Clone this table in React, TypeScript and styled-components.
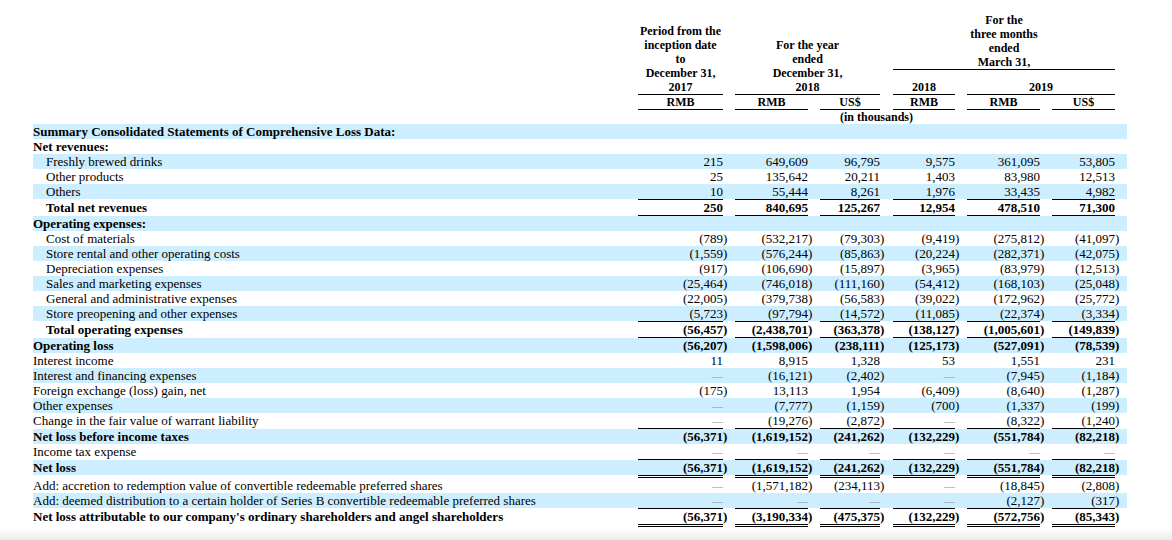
import React from "react";
import styled, { createGlobalStyle } from "styled-components";

const GlobalStyle = createGlobalStyle`
  html, body { margin: 0; padding: 0; }
  body {
    min-height: 540px;
    background: linear-gradient(to bottom, #ffffff 0, #ffffff 528px, #ebebeb 540px);
    font-family: "Liberation Serif", "Times New Roman", serif;
    color: #000;
  }
`;

const COLS = "605px 85px 12px 73px 12px 60px 13px 62px 12px 73px 12px 63px 12px";

const Page = styled.div`
  padding-left: 33px;
  width: 1094px;
`;

const Header = styled.div`
  display: grid;
  grid-template-columns: ${COLS};
  grid-template-rows: 69px 1px 24px 1px 14px 1px 14px;
  font-weight: 700;
  font-size: 12px;
  line-height: 14px;
  text-align: center;
`;

const HeadCell = styled.div<{ $col: string; $row: string }>`
  grid-column: ${(p) => p.$col};
  grid-row: ${(p) => p.$row};
  align-self: end;
  white-space: nowrap;
`;

const HeadRule = styled.div<{ $col: string; $row: number }>`
  grid-column: ${(p) => p.$col};
  grid-row: ${(p) => p.$row};
  background: #000;
  height: 1px;
`;

const Table = styled.div`
  display: flex;
  flex-direction: column;
`;

const Row = styled.div<{ $shade: boolean; $bold?: boolean }>`
  display: grid;
  grid-template-columns: ${COLS};
  height: 15px;
  line-height: 15px;
  font-size: 13px;
  font-weight: ${(p) => (p.$bold ? 700 : 400)};
  background: ${(p) => (p.$shade ? "#cceeff" : "transparent")};
`;

const Label = styled.div<{ $indent?: boolean }>`
  padding-left: ${(p) => (p.$indent ? "13px" : "0")};
  white-space: nowrap;
`;

const Num = styled.div`
  text-align: right;
  white-space: nowrap;
`;

const Trail = styled.div`
  text-align: left;
  white-space: nowrap;
`;

const Dash = styled.span`
  color: #8e8e8e;
  font-size: 11px;
  font-weight: 700;
`;

const RuleRow = styled.div<{ $double?: boolean }>`
  display: grid;
  grid-template-columns: ${COLS};
  height: ${(p) => (p.$double ? 3 : 1)}px;
`;

const RuleSeg = styled.div<{ $double?: boolean }>`
  border-top: 1px solid #000;
  border-bottom: ${(p) => (p.$double ? "1px solid #000" : "none")};
`;

type Line = {
  label: string;
  bold?: boolean;
  indent?: boolean;
  values?: string[];
  rule?: "single" | "double";
};

const D = "—";

const rows: Line[] = [
  { label: "Summary Consolidated Statements of Comprehensive Loss Data:", bold: true },
  { label: "Net revenues:", bold: true },
  { label: "Freshly brewed drinks", indent: true, values: ["215", "649,609", "96,795", "9,575", "361,095", "53,805"] },
  { label: "Other products", indent: true, values: ["25", "135,642", "20,211", "1,403", "83,980", "12,513"] },
  { label: "Others", indent: true, values: ["10", "55,444", "8,261", "1,976", "33,435", "4,982"], rule: "single" },
  { label: "Total net revenues", bold: true, indent: true, values: ["250", "840,695", "125,267", "12,954", "478,510", "71,300"], rule: "single" },
  { label: "Operating expenses:", bold: true },
  { label: "Cost of materials", indent: true, values: ["(789)", "(532,217)", "(79,303)", "(9,419)", "(275,812)", "(41,097)"] },
  { label: "Store rental and other operating costs", indent: true, values: ["(1,559)", "(576,244)", "(85,863)", "(20,224)", "(282,371)", "(42,075)"] },
  { label: "Depreciation expenses", indent: true, values: ["(917)", "(106,690)", "(15,897)", "(3,965)", "(83,979)", "(12,513)"] },
  { label: "Sales and marketing expenses", indent: true, values: ["(25,464)", "(746,018)", "(111,160)", "(54,412)", "(168,103)", "(25,048)"] },
  { label: "General and administrative expenses", indent: true, values: ["(22,005)", "(379,738)", "(56,583)", "(39,022)", "(172,962)", "(25,772)"] },
  { label: "Store preopening and other expenses", indent: true, values: ["(5,723)", "(97,794)", "(14,572)", "(11,085)", "(22,374)", "(3,334)"], rule: "single" },
  { label: "Total operating expenses", bold: true, indent: true, values: ["(56,457)", "(2,438,701)", "(363,378)", "(138,127)", "(1,005,601)", "(149,839)"], rule: "single" },
  { label: "Operating loss", bold: true, values: ["(56,207)", "(1,598,006)", "(238,111)", "(125,173)", "(527,091)", "(78,539)"] },
  { label: "Interest income", values: ["11", "8,915", "1,328", "53", "1,551", "231"] },
  { label: "Interest and financing expenses", values: [D, "(16,121)", "(2,402)", D, "(7,945)", "(1,184)"] },
  { label: "Foreign exchange (loss) gain, net", values: ["(175)", "13,113", "1,954", "(6,409)", "(8,640)", "(1,287)"] },
  { label: "Other expenses", values: [D, "(7,777)", "(1,159)", "(700)", "(1,337)", "(199)"] },
  { label: "Change in the fair value of warrant liability", values: [D, "(19,276)", "(2,872)", D, "(8,322)", "(1,240)"], rule: "single" },
  { label: "Net loss before income taxes", bold: true, values: ["(56,371)", "(1,619,152)", "(241,262)", "(132,229)", "(551,784)", "(82,218)"] },
  { label: "Income tax expense", values: [D, D, D, D, D, D], rule: "single" },
  { label: "Net loss", bold: true, values: ["(56,371)", "(1,619,152)", "(241,262)", "(132,229)", "(551,784)", "(82,218)"], rule: "double" },
  { label: "Add: accretion to redemption value of convertible redeemable preferred shares", values: [D, "(1,571,182)", "(234,113)", D, "(18,845)", "(2,808)"] },
  { label: "Add: deemed distribution to a certain holder of Series B convertible redeemable preferred shares", values: [D, D, D, D, "(2,127)", "(317)"], rule: "single" },
  { label: "Net loss attributable to our company's ordinary shareholders and angel shareholders", bold: true, values: ["(56,371)", "(3,190,334)", "(475,375)", "(132,229)", "(572,756)", "(85,343)"], rule: "double" },
];

const Value: React.FC<{ v?: string }> = ({ v }) => {
  if (!v) {
    return (
      <>
        <Num />
        <Trail />
      </>
    );
  }
  if (v === D) {
    return (
      <>
        <Num>
          <Dash>—</Dash>
        </Num>
        <Trail />
      </>
    );
  }
  const neg = v.endsWith(")");
  return (
    <>
      <Num>{neg ? v.slice(0, -1) : v}</Num>
      <Trail>{neg ? ")" : ""}</Trail>
    </>
  );
};

const Rule: React.FC<{ double?: boolean }> = ({ double }) => (
  <RuleRow $double={double}>
    <div />
    {[0, 1, 2, 3, 4, 5].map((i) => (
      <React.Fragment key={i}>
        <RuleSeg $double={double} />
        <div />
      </React.Fragment>
    ))}
  </RuleRow>
);

export default function App() {
  return (
    <>
      <GlobalStyle />
      <Page>
        <Header>
          <HeadCell $col="2 / 3" $row="1 / 4">
            Period from the
            <br />
            inception date
            <br />
            to
            <br />
            December 31,
            <br />
            2017
          </HeadCell>
          <HeadCell $col="4 / 7" $row="1 / 4">
            For the year
            <br />
            ended
            <br />
            December 31,
            <br />
            2018
          </HeadCell>
          <HeadCell $col="8 / 13" $row="1 / 2">
            For the
            <br />
            three months
            <br />
            ended
            <br />
            March 31,
          </HeadCell>
          <HeadRule $col="8 / 13" $row={2} />
          <HeadCell $col="8 / 9" $row="3 / 4">2018</HeadCell>
          <HeadCell $col="10 / 13" $row="3 / 4">2019</HeadCell>
          <HeadRule $col="2 / 3" $row={4} />
          <HeadRule $col="4 / 7" $row={4} />
          <HeadRule $col="8 / 9" $row={4} />
          <HeadRule $col="10 / 13" $row={4} />
          <HeadCell $col="2 / 3" $row="5 / 6">RMB</HeadCell>
          <HeadCell $col="4 / 5" $row="5 / 6">RMB</HeadCell>
          <HeadCell $col="6 / 7" $row="5 / 6">US$</HeadCell>
          <HeadCell $col="8 / 9" $row="5 / 6">RMB</HeadCell>
          <HeadCell $col="10 / 11" $row="5 / 6">RMB</HeadCell>
          <HeadCell $col="12 / 13" $row="5 / 6">US$</HeadCell>
          <HeadRule $col="2 / 3" $row={6} />
          <HeadRule $col="4 / 5" $row={6} />
          <HeadRule $col="6 / 7" $row={6} />
          <HeadRule $col="8 / 9" $row={6} />
          <HeadRule $col="10 / 11" $row={6} />
          <HeadRule $col="12 / 13" $row={6} />
          <HeadCell $col="2 / 13" $row="7 / 8">(in thousands)</HeadCell>
        </Header>
        <Table>
          {rows.map((r, i) => (
            <React.Fragment key={i}>
              <Row $shade={i % 2 === 0} $bold={r.bold}>
                <Label $indent={r.indent}>{r.label}</Label>
                {[0, 1, 2, 3, 4, 5].map((c) => (
                  <Value key={c} v={r.values?.[c]} />
                ))}
              </Row>
              {r.rule && <Rule double={r.rule === "double"} />}
            </React.Fragment>
          ))}
        </Table>
      </Page>
    </>
  );
}
